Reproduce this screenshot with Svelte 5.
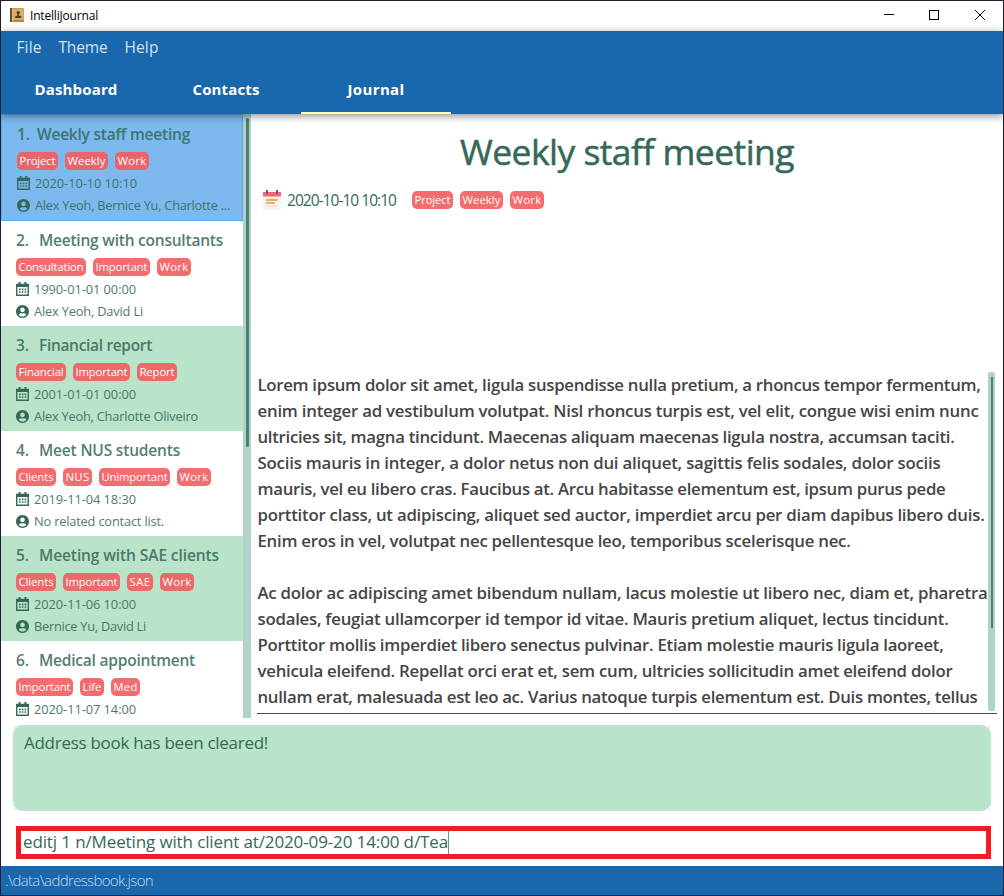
<script>
  const tagWidths = {
    Project: 41, Weekly: 43, Work: 34, Consultation: 70, Important: 57, Financial: 50,
    Report: 40, Clients: 40, NUS: 29, Unimportant: 71, SAE: 26, Life: 24, Med: 29
  };

  const menus = [['File', 25], ['Theme', 49], ['Help', 34]];
  const tabs = [['Dashboard', 83], ['Contacts', 67], ['Journal', 57]];

  const entries = [
    { title: 'Weekly staff meeting', w: 153, tags: ['Project', 'Weekly', 'Work'], date: '2020-10-10 10:10', people: 'Alex Yeoh, Bernice Yu, Charlotte ...', pw: 195 },
    { title: 'Meeting with consultants', w: 184, tags: ['Consultation', 'Important', 'Work'], date: '1990-01-01 00:00', people: 'Alex Yeoh, David Li', pw: 109 },
    { title: 'Financial report', w: 113, tags: ['Financial', 'Important', 'Report'], date: '2001-01-01 00:00', people: 'Alex Yeoh, Charlotte Oliveiro', pw: 164 },
    { title: 'Meet NUS students', w: 141, tags: ['Clients', 'NUS', 'Unimportant', 'Work'], date: '2019-11-04 18:30', people: 'No related contact list.', pw: 130 },
    { title: 'Meeting with SAE clients', w: 180, tags: ['Clients', 'Important', 'SAE', 'Work'], date: '2020-11-06 10:00', people: 'Bernice Yu, David Li', pw: 112 },
    { title: 'Medical appointment', w: 156, tags: ['Important', 'Life', 'Med'], date: '2020-11-07 14:00' }
  ];

  const lines = [
    ['Lorem ipsum dolor sit amet, ligula suspendisse nulla pretium, a rhoncus tempor fermentum,', 723],
    ['enim integer ad vestibulum volutpat. Nisl rhoncus turpis est, vel elit, congue wisi enim nunc', 721],
    ['ultricies sit, magna tincidunt. Maecenas aliquam maecenas ligula nostra, accumsan taciti.', 697],
    ['Sociis mauris in integer, a dolor netus non dui aliquet, sagittis felis sodales, dolor sociis', 683],
    ['mauris, vel eu libero cras. Faucibus at. Arcu habitasse elementum est, ipsum purus pede', 688],
    ['porttitor class, ut adipiscing, aliquet sed auctor, imperdiet arcu per diam dapibus libero duis.', 727],
    ['Enim eros in vel, volutpat nec pellentesque leo, temporibus scelerisque nec.', 593],
    ['', 0],
    ['Ac dolor ac adipiscing amet bibendum nullam, lacus molestie ut libero nec, diam et, pharetra', 730],
    ['sodales, feugiat ullamcorper id tempor id vitae. Mauris pretium aliquet, lectus tincidunt.', 691],
    ['Porttitor mollis imperdiet libero senectus pulvinar. Etiam molestie mauris ligula laoreet,', 686],
    ['vehicula eleifend. Repellat orci erat et, sem cum, ultricies sollicitudin amet eleifend dolor', 695],
    ['nullam erat, malesuada est leo ac. Varius natoque turpis elementum est. Duis montes, tellus', 720]
  ];

  // Spreads the letters so that the text takes up the given width.
  function fit(node, width) {
    const count = node.textContent.length;
    if (!count) return;
    const natural = node.getBoundingClientRect().width;
    node.style.letterSpacing = `${(width - natural) / count}px`;
  }
</script>

{#snippet tagList(tags)}
  <div class="tags">
    {#each tags as tag}
      <span class="tag" style:width="{tagWidths[tag]}px"><span class="t" use:fit={tagWidths[tag] - 5}>{tag}</span></span>
    {/each}
  </div>
{/snippet}

<div class="window">
  <header class="titlebar">
    <svg class="app-icon" width="14" height="14" viewBox="0 0 14 14">
      <rect width="14" height="14" rx="1" fill="#c99a50" />
      <rect x="3" y="1" width="10.5" height="11" fill="#dcae62" />
      <rect width="2" height="14" fill="#6b4c30" />
      <rect x="2" width="1" height="14" fill="#d9c090" />
      <path d="M3 13h11" stroke="#9a6f3a" />
      <circle cx="8.2" cy="4.8" r="1.7" fill="#51402c" />
      <path d="M7.400 6h1.600v1.400l2.500 1V10H5V8.400l2.400-1z" fill="#51402c" />
    </svg>
    <span class="t app-name" use:fit={68}>IntelliJournal</span>
    <div class="controls">
      <svg width="10" height="10" viewBox="0 0 10 10"><path d="M0 4.500h10" /></svg>
      <svg width="10" height="10" viewBox="0 0 10 10"><rect x=".5" y=".5" width="9" height="9" /></svg>
      <svg width="10" height="10" viewBox="0 0 10 10"><path d="M0 0l10 10M10 0L0 10" /></svg>
    </div>
  </header>

  <div class="top">
    <nav class="menus">
      {#each menus as [name, w]}<span class="t" use:fit={w}>{name}</span>{/each}
    </nav>
    <nav class="tabs">
      {#each tabs as [name, w]}
        <div class="tab" class:active={name === 'Journal'}><span class="t" use:fit={w}>{name}</span></div>
      {/each}
    </nav>
  </div>

  <main>
    <div class="list">
      {#each entries as e, i}
        <article class="entry" class:selected={i === 0} class:tinted={i % 2 === 0 && i > 0}>
          <h2><span class="num">{i + 1}.</span><span class="t" use:fit={e.w}>{e.title}</span></h2>
          {@render tagList(e.tags)}
          <div class="info">
            <svg width="13" height="14" viewBox="0 0 13 14">
              <path d="M.75 2.500h11.500v10.750H.75z" fill="none" stroke="currentColor" stroke-width="1.400" />
              <path d="M0 1.900h13V5H0zM2.600 0h2v3h-2zM8.400 0h2v3h-2z" fill="currentColor" />
              <path d="M3 7.400h7.200M3 10h7.200" stroke="currentColor" stroke-width="1.600" stroke-dasharray="1.600 1.200" />
            </svg>
            <span class="t" use:fit={102}>{e.date}</span>
          </div>
          {#if e.people}
            <div class="info">
              <svg width="13" height="13" viewBox="0 8 496 496"><path fill="currentColor" d="M248 8C111 8 0 119 0 256s111 248 248 248 248-111 248-248S385 8 248 8zm0 96c48.600 0 88 39.400 88 88s-39.400 88-88 88-88-39.400-88-88 39.400-88 88-88zm0 344c-58.700 0-111.300-26.600-146.500-68.200 18.800-35.400 55.600-59.800 98.500-59.800 2.400 0 4.800.4 7.100 1.100 13 4.200 26.600 6.900 40.900 6.900 14.300 0 28-2.700 40.900-6.900 2.300-.7 4.700-1.100 7.100-1.100 42.900 0 79.700 24.400 98.500 59.800C359.300 421.400 306.700 448 248 448z" /></svg>
              <span class="t" use:fit={e.pw}>{e.people}</span>
            </div>
          {/if}
        </article>
      {/each}
    </div>
    <div class="scroll"><i></i></div>

    <section class="detail">
      <h1><span class="t" use:fit={334}>Weekly staff meeting</span></h1>
      <div class="meta">
        <svg width="18" height="20" viewBox="0 0 18 20">
          <path d="M0 6h18v14H0z" fill="#f5f5f5" />
          <path d="M0 2h18v4.500H0z" fill="#ff6470" />
          <path d="M3 0h2v4H3zM13 0h2v4h-2z" fill="#43658b" />
          <path d="M3 9h12v2H3zM3 12h9v2H3z" fill="#ffab5c" />
          <path d="M3 15.500h12v1.500H3z" fill="#e3e5e8" />
        </svg>
        <span class="t date" use:fit={109}>2020-10-10 10:10</span>
        {@render tagList(entries[0].tags)}
      </div>
      <div class="body">
        <div class="text">
          {#each lines as [text, w]}
            <p><span class="t" use:fit={w}>{text}</span></p>
          {/each}
        </div>
        <div class="body-scroll"><i></i></div>
      </div>
    </section>
  </main>

  <div class="result-wrap"><div class="result"><span class="t" use:fit={244}>Address book has been cleared!</span></div></div>
  <div class="command"><span class="t" use:fit={425}>editj 1 n/Meeting with client at/2020-09-20 14:00 d/Tea</span><i class="caret"></i></div>
  <footer><span class="t" use:fit={148}>.\data\addressbook.json</span></footer>
</div>

<style>
  :global(body) { margin: 0; }
  .window {
    box-sizing: border-box; width: 1004px; height: 896px; overflow: hidden;
    border: 1px solid #1c1f2e; background: #fff; color: #356859;
    display: flex; flex-direction: column;
    font-family: "Open Sans", "Noto Sans", sans-serif;
  }
  .t { display: inline-block; white-space: pre; }
  .titlebar { height: 30px; flex: none; display: flex; align-items: center; padding: 0 18px 2px 9px; box-sizing: border-box; color: #000; }
  .app-icon { margin-right: 6px; }
  .app-name { font-size: 12px; }
  .controls { margin-left: auto; display: flex; gap: 36px; }
  .controls svg { fill: none; stroke: #000; stroke-width: 1; overflow: visible; }
  .controls svg:first-child { margin-right: -1px; }
  .top { height: 83px; flex: none; background: #1967ad; position: relative; z-index: 1; box-shadow: 0 2px 8px rgba(0, 0, 0, .45); }
  .menus { box-sizing: border-box; height: 34px; display: flex; align-items: center; gap: 17px; padding: 0 0 2px 15.5px; font-size: 15.5px; color: #d3e2ef; }
  .tabs { height: 49px; display: flex; color: #fff; font-weight: 700; font-size: 15px; }
  .tab { box-sizing: border-box; width: 150px; text-align: center; line-height: 49px; height: 49px; border-bottom: 2px solid transparent; }
  .tab.active { border-color: #ffffb5; }
  main { height: 604px; flex: none; display: flex; }
  .list { width: 242px; overflow: hidden; }
  .entry { box-sizing: border-box; height: 105px; padding: 7px 0 0 15px; }
  .entry.selected { height: 107px; border: 1px solid #59a7ec; background: #7cb9ee; }
  .entry.tinted { background: #b9e4c9; }
  h2 { margin: 0 0 7px; height: 23px; display: flex; align-items: center; font-size: 15.5px; font-weight: 600; opacity: .85; }
  .num { width: 23px; }
  .selected .num { width: 20px; }
  .tags { display: flex; gap: 7px; }
  .tag { height: 18px; border-radius: 5px; background: #f36c6e; color: #fff; font-size: 11.3px; line-height: 17px; text-align: center; display: flex; justify-content: center; }
  .entry .tags { margin-bottom: 2px; }
  .selected .tag { background: #e8656b; }
  .tinted .tag { background: #ec6a68; }
  .info { height: 22px; display: flex; align-items: center; gap: 5px; font-size: 12.8px; white-space: nowrap; }
  .info .t { opacity: .87; }
  .scroll { width: 8px; background: #b1d2c9; display: flex; }
  .scroll i { width: 3px; height: 329px; margin: 4px 0 0 3px; border-radius: 2px; background: #4a806f; }
  .detail { flex: 1; padding: 0 6px 0 6px; display: flex; flex-direction: column; }
  h1 { box-sizing: border-box; margin: 0; height: 76px; display: flex; justify-content: center; align-items: center; padding: 0 0 3px; font-size: 35.5px; font-weight: 400; -webkit-text-stroke: .5px #356859; }
  .meta { height: 20px; display: flex; align-items: center; padding-left: 6px; }
  .meta .date { font-size: 15.5px; margin: 0 16px 0 6px; }
  .body { margin-top: 162px; height: 341px; display: flex; border-bottom: 1px solid #4a4a4a; overflow: hidden; }
  .text { box-sizing: border-box; flex: none; width: 731px; padding-left: .5px; color: #454545; font-size: 16.8px; font-weight: 600; overflow: hidden; }
  p { margin: 0; height: 26px; line-height: 26px; white-space: nowrap; }
  .body-scroll { width: 7px; height: 339px; background: #b1d2c9; border-radius: 2px; display: flex; }
  .body-scroll i { width: 2px; height: 251px; margin: 5px 0 0 3px; background: #4a806f; }
  .result-wrap { margin: 7px 12px 0; height: 86px; flex: none; background: #f4f4f4; }
  .result { box-sizing: border-box; height: 86px; border-radius: 10px; background: #b9e4c9; padding: 6px 11px; font-size: 17px; line-height: 24px; }
  .command { box-sizing: border-box; margin: 15px 12px 0 15px; height: 33px; flex: none; border: 5px solid #ee1c24; padding-left: 2px; display: flex; align-items: center; font-size: 17px; line-height: 21px; }
  .command .t { margin-top: -2px; }
  .caret { width: 1px; height: 23px; background: #6d9286; }
  footer { margin-top: 7px; flex: 1; background: #1967ad; color: #c4daec; font-size: 15px; font-weight: 300; line-height: 29px; padding-left: 4px; }
</style>
